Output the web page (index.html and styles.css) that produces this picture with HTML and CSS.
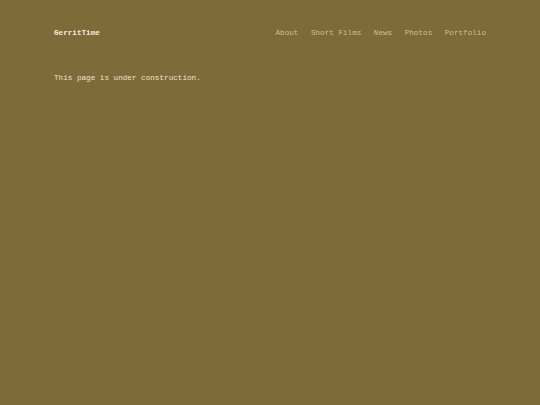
FILE: index.html
```html
<!DOCTYPE html>
<html>
<head>
<meta charset="utf-8">
<link rel="stylesheet" href="styles.css">
</head>
<body>
<div class="page">
  <header class="header">
    <div class="brand">GerritTime</div>
    <nav class="nav">
      <a href="#">About</a>
      <a href="#">Short Films</a>
      <a href="#">News</a>
      <a href="#">Photos</a>
      <a href="#">Portfolio</a>
    </nav>
  </header>
  <main class="content">
    <p class="notice">This page is under construction.</p>
  </main>
</div>
</body>
</html>
```
FILE: styles.css
```css
html, body {
  margin: 0;
  padding: 0;
  background: #7d6b39;
  height: 100%;
}
body {
  font-family: "Liberation Mono", "Courier New", monospace;
  font-size: 7.65px;
  line-height: 10px;
}
.page {
  padding: 28px 54px 0 54px;
}
.header {
  display: flex;
  justify-content: space-between;
  align-items: center;
}
.brand {
  font-weight: bold;
  color: #f3ecdc;
}
.nav {
  display: flex;
  gap: 12.5px;
}
.nav a {
  color: #cdbf9c;
  text-decoration: none;
}
.content {
  padding-top: 35px;
}
.notice {
  margin: 0;
  color: #eee4cc;
}
```
